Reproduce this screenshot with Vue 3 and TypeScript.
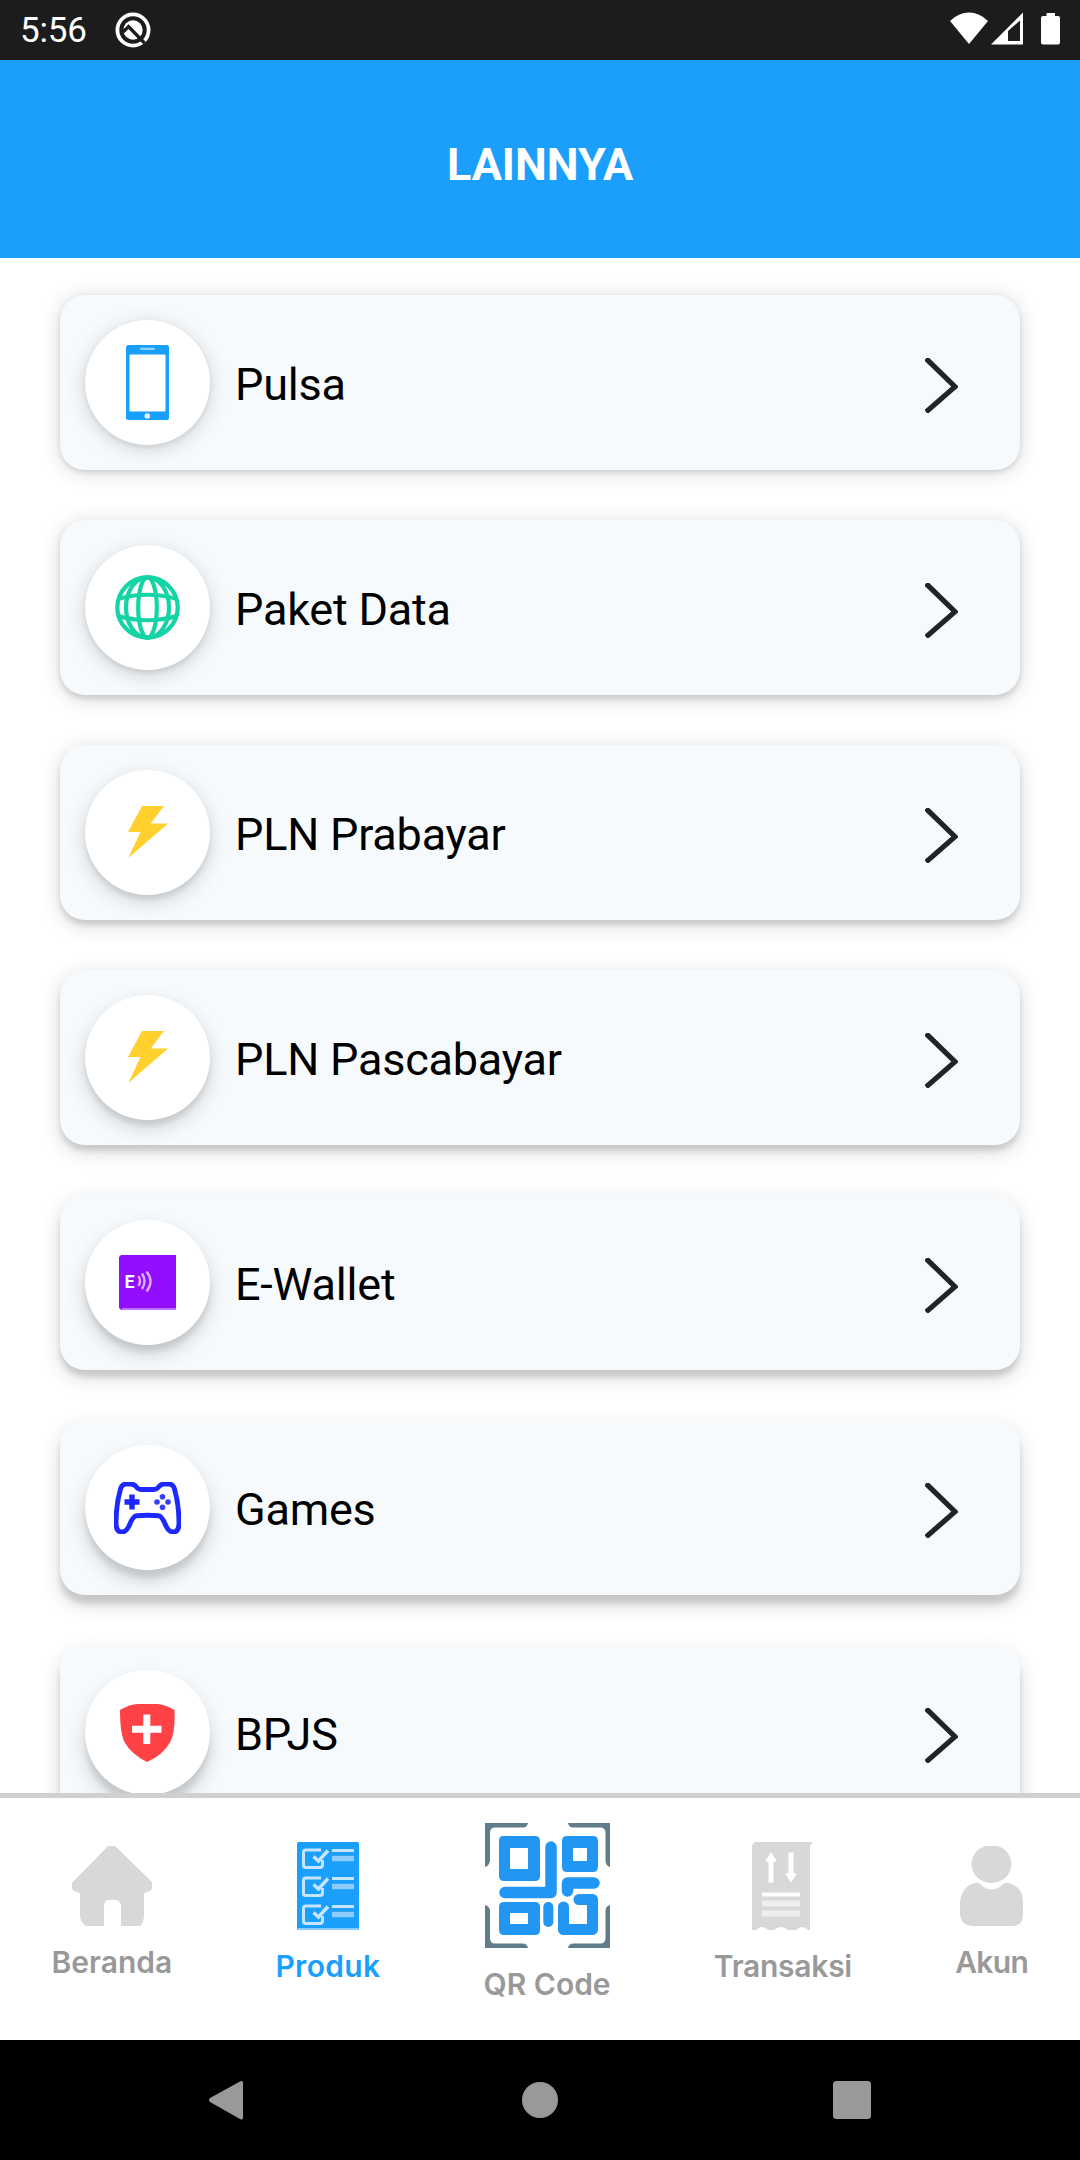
<script setup lang="ts">
interface Product {
  icon: 'phone' | 'globe' | 'bolt' | 'wallet' | 'gamepad' | 'shield'
  label: string
}

interface Tab {
  icon: 'home' | 'checklist' | 'qr' | 'receipt' | 'user'
  label: string
}

const products: Product[] = [
  { icon: 'phone', label: 'Pulsa' },
  { icon: 'globe', label: 'Paket Data' },
  { icon: 'bolt', label: 'PLN Prabayar' },
  { icon: 'bolt', label: 'PLN Pascabayar' },
  { icon: 'wallet', label: 'E-Wallet' },
  { icon: 'gamepad', label: 'Games' },
  { icon: 'shield', label: 'BPJS' },
]

const tabs: Tab[] = [
  { icon: 'home', label: 'Beranda' },
  { icon: 'checklist', label: 'Produk' },
  { icon: 'qr', label: 'QR Code' },
  { icon: 'receipt', label: 'Transaksi' },
  { icon: 'user', label: 'Akun' },
]

const activeTab: Tab['icon'] = 'checklist'

// Elevation shadows fall further the lower the card sits on the screen.
const shadowOffset = (index: number): string => `${(2 + index * 1.25).toFixed(2)}px`
</script>

<template>
  <div class="screen">
    <div class="status">
      <span class="clock">5:56</span>
      <svg class="app-mark" width="36" height="36" viewBox="0 0 36 36">
        <circle cx="18" cy="18" r="15.6" fill="none" stroke="#fff" stroke-width="3.8" />
        <circle cx="18" cy="18" r="9.7" fill="#fff" />
        <path d="M8 20 L13.5 14.6 L29.5 31" fill="none" stroke="#1c1c1c" stroke-width="3.4" />
      </svg>
      <svg class="signals" width="112" height="34" viewBox="0 0 112 34">
        <path d="M0 9 Q8.5 0.5 19 0.5 T38 9 L19 32 Z" fill="#fff" />
        <path d="M41 32.5 L73 0.5 V32.5 Z M58 19 V29 H70 V8.5 Z" fill="#fff" fill-rule="evenodd" />
        <path d="M96.5 1 H105 V4 H108 Q110 4 110 6 V30.5 Q110 32.5 108 32.5 H93 Q91 32.5 91 30.5 V6 Q91 4 93 4 H96.5 Z" fill="#fff" />
      </svg>
    </div>

    <header class="header"><h1>LAINNYA</h1></header>

    <main class="products">
      <div
        v-for="(item, i) in products"
        :key="item.label"
        class="card"
        :style="{ '--drop': shadowOffset(i) }"
      >
        <div class="badge">
          <svg v-if="item.icon === 'phone'" width="43" height="75" viewBox="0 0 43 75">
            <rect width="43" height="75" rx="2.5" fill="#179ffb" />
            <rect x="3.5" y="9.5" width="36" height="57" rx="1" fill="#fff" />
            <path d="M15 3.8 H28" stroke="#8fd0fd" stroke-width="2.2" stroke-linecap="round" />
            <circle cx="21.3" cy="71" r="2.8" fill="#e2f3ff" />
          </svg>
          <svg v-else-if="item.icon === 'globe'" width="65" height="65" viewBox="0 0 65 65" fill="none" stroke="#14d3a4" stroke-width="4.2">
            <circle cx="32.5" cy="32.5" r="30.2" />
            <ellipse cx="32.5" cy="32.5" rx="9.3" ry="30.2" />
            <ellipse cx="32.5" cy="32.5" rx="21.5" ry="30.2" />
            <path d="M3 24 Q32.5 15.5 62 24 M3 41 Q32.5 49.5 62 41" />
          </svg>
          <svg v-else-if="item.icon === 'bolt'" class="bolt" width="40" height="52" viewBox="0 0 40 52">
            <path d="M14 0 H36 L22.7 17.4 H40 L0.3 52 L12.5 26 H0 Z" fill="#ffd02e" />
          </svg>
          <svg v-else-if="item.icon === 'wallet'" width="57" height="55" viewBox="0 0 57 55">
            <path d="M2 0 H57 V55 H2.5 L0 53 V2 Z" fill="#930dff" />
            <path d="M3 54 H57" stroke="#be70ff" stroke-width="2" />
            <text x="5.6" y="32.6" class="wallet-letter">E</text>
            <g fill="none" stroke="#d9aeff" stroke-width="2.4">
              <path d="M19.5 21 Q22.5 26 19.5 31" />
              <path d="M23 18.5 Q28 26 23 34" />
              <path d="M27.5 16.5 Q35.5 26.5 27.5 36.5" />
            </g>
          </svg>
          <svg v-else-if="item.icon === 'gamepad'" width="67" height="52" viewBox="0 0 67 52">
            <path
              d="M12 2 H17 Q20 2 22 4.5 Q24 7.5 27 7.5 H40 Q43 7.5 45 4.5 Q47 2 50 2 H55 Q59 2 60.5 7 Q65 23 65 41 Q65 50 59 50 Q55 50 52 44 Q48 34 44.5 33.8 Q33.5 32.7 22.5 33.8 Q19 34 15 44 Q12 50 8 50 Q2 50 2 41 Q2 23 6.5 7 Q8 2 12 2 Z"
              fill="none" stroke="#1d27ff" stroke-width="4.9" stroke-linejoin="round"
            />
            <path d="M18 12.5 V27.5 M10.5 20 H25.5" stroke="#1d27ff" stroke-width="5.4" />
            <g fill="#3440ff">
              <circle cx="48.5" cy="14.8" r="2.8" />
              <circle cx="48.5" cy="25.2" r="2.8" />
              <circle cx="43" cy="20" r="2.8" />
              <circle cx="54" cy="20" r="2.8" />
            </g>
          </svg>
          <svg v-else width="55" height="58" viewBox="0 0 55 58">
            <path d="M0 6 Q10 0 18 0 H38 Q46 1 54.5 6 Q55.5 28 50 38.500 Q43 51 27 58 Q11 50 4.5 38 Q0 29 0 6 Z" fill="#ff4245" />
            <path d="M26.8 10.5 V40 M12 25.2 H41.5" stroke="#fff" stroke-width="7" />
          </svg>
        </div>
        <span class="name">{{ item.label }}</span>
        <svg class="chevron" width="33" height="55" viewBox="0 0 33 55">
          <path d="M1 0.5 L30 28.7 L1 54" fill="none" stroke="#202426" stroke-width="5.2" />
        </svg>
      </div>
    </main>

    <nav class="tabs">
      <div
        v-for="tab in tabs"
        :key="tab.label"
        class="tab"
        :class="[`tab-${tab.icon}`, { active: tab.icon === activeTab }]"
      >
        <svg v-if="tab.icon === 'home'" width="80" height="80" viewBox="0 0 80 80">
          <path d="M36 0 H43 L80 36 V42 Q79 46 72 47 V69 Q72 76 68 80 H49 V60 Q48 54 44 54 H37 Q32 54 32 60 V80 H14 Q8 76 8 69 V47 Q1 46 0 42 V37 Z" fill="#d8d8d8" />
        </svg>
        <svg v-else-if="tab.icon === 'checklist'" width="62" height="88" viewBox="0 0 62 88">
          <rect width="62" height="88" rx="1.5" fill="#1b9ffc" />
          <path d="M1 87 H61" stroke="#8acdfd" stroke-width="2" />
          <g v-for="y in [0, 28, 56]" :key="y" :transform="`translate(0 ${y})`" fill="none" stroke="#c5e5fe">
            <path d="M24 8 H9 Q6.5 8 6.5 10 V23.5 Q6.5 25.5 9 25.5 H23 Q25.5 25.5 25.5 23 V18" stroke-width="3" />
            <path d="M16.5 14.5 L21.5 19 L31 8.5" stroke-width="3.4" />
            <path d="M35 8.5 H57" stroke-width="3" />
            <path d="M35 16.5 H57" stroke-width="5.4" stroke="#8dcdfd" />
          </g>
        </svg>
        <svg v-else-if="tab.icon === 'qr'" width="125" height="125" viewBox="0 0 125 125">
          <path
            d="M0 0 H43 Q42 4.5 38 4.5 H10 Q5 4.5 5 10 V38 Q4 43 0 44 Z M125 0 H83 Q84 4.5 88 4.5 H115 Q120.5 4.5 120.5 10 V38 Q121 43 125 44 Z M0 125 H43 Q42 120.5 38 120.5 H10 Q5 120.5 5 115 V87 Q4 83 0 82 Z M125 125 H83 Q84 120.5 88 120.5 H115 Q120.5 120.5 120.5 115 V87 Q121 83 125 82 Z"
            fill="#607d8b"
          />
          <g fill="#2196f3" fill-rule="evenodd">
            <path d="M18 13 H50 Q55 13 55 18 V53 Q55 58 50 58 H19 Q14 58 14 53 V18 Q14 13 18 13 Z M25 25 V46 H43 V25 Z" />
            <path d="M82 13 H108 Q113 13 113 18 V43 Q113 49 108 49 H82 Q77 49 77 44 V18 Q77 13 82 13 Z M88 25 V38 H102 V25 Z" />
            <path d="M19 79 H50 Q55 79 55 84 V107 Q55 112 50 112 H19 Q14 112 14 107 V84 Q14 79 19 79 Z M25 90 V101 H43 V90 Z" />
          </g>
          <g fill="none" stroke="#2196f3" stroke-linecap="round" stroke-linejoin="round">
            <path d="M66 24 V69.5 H20" stroke-width="11.5" />
            <path d="M63.3 84 V99" stroke-width="10" />
            <path d="M109 60 H82.5 V68" stroke-width="11.5" />
            <path d="M78.5 84 V106.500 H107.5 V76.5 H94" stroke-width="11" />
          </g>
        </svg>
        <svg v-else-if="tab.icon === 'receipt'" width="62" height="88" viewBox="0 0 62 88">
          <path d="M3 0 H62 Q58 1 58 7 V88 H56 Q50 82 44 88 H36 Q29 82 22 88 H16 Q10 82 4 88 H0 V3 Z" fill="#d8d8d8" />
          <g fill="none" stroke="#fff">
            <path d="M19 40.5 V17 M39 10.5 V34" stroke-width="5" />
            <path d="M19 10 L25 19.5 H13 Z M39 40.5 L45 31.5 H33 Z" fill="#fff" stroke="none" />
            <path d="M10 52.5 H48" stroke-width="4" />
            <path d="M10 61.5 H48 M10 71.5 H48" stroke-width="6" stroke="#eee" />
          </g>
        </svg>
        <svg v-else width="63" height="80" viewBox="0 0 63 80">
          <ellipse cx="31.5" cy="18" rx="20" ry="19" fill="#d8d8d8" />
          <path d="M15 37 Q19 36 21 39 Q32 48 42 39 Q45 36 49 37 Q63 41 63 56 V70 Q62 80 53 80 H12 Q2 80 0 69 V56 Q2 40 15 37 Z" fill="#d8d8d8" />
        </svg>
        <span class="tab-label">{{ tab.label }}</span>
      </div>
    </nav>

    <div class="system">
      <svg width="39" height="40" viewBox="0 0 39 40"><path d="M32 1.5 L2 18 Q0 20 2 22 L32 39 Q35 40.5 35 37.5 V2.5 Q35 0 32 1.5 Z" fill="#999" /></svg>
      <svg width="36" height="36" viewBox="0 0 36 36"><circle cx="18" cy="18" r="18" fill="#999" /></svg>
      <svg width="38" height="38" viewBox="0 0 38 38"><rect width="38" height="38" rx="3.5" fill="#999" /></svg>
    </div>
  </div>
</template>

<style>
body {
  margin: 0;
  background: #fff;
}
</style>

<style scoped>
.screen {
  width: 1080px;
  height: 2160px;
  display: flex;
  flex-direction: column;
  overflow: hidden;
  background: #fff;
  font-family: Roboto, sans-serif;
}
svg {
  display: block;
  flex: none;
}
.status {
  box-sizing: border-box;
  height: 60px;
  flex: none;
  display: flex;
  align-items: center;
  padding: 0 18px 0 20px;
  background: #1c1c1c;
}
.clock {
  width: 95px;
  color: #fff;
  font-size: 35px;
  line-height: 58px;
  padding-top: 2px;
  letter-spacing: -0.2px;
}
.signals {
  margin: 0 0 2px auto;
}
.header {
  height: 198px;
  flex: none;
  display: flex;
  align-items: center;
  justify-content: center;
  background: #1b9ffc;
}
h1 {
  margin: 0;
  padding-top: 12px;
  color: #fff;
  font-size: 45px;
  font-weight: 700;
  line-height: 60px;
}
.products {
  box-sizing: border-box;
  height: 1535px;
  flex: none;
  display: flex;
  flex-direction: column;
  gap: 50px;
  padding: 37px 60px 0;
  overflow: hidden;
}
.card {
  box-sizing: border-box;
  height: 175px;
  flex: none;
  display: flex;
  align-items: center;
  padding: 0 62px 0 25px;
  border-radius: 25px;
  background: #f6fafd;
  box-shadow: 0 var(--drop) 5px rgba(0, 0, 0, 0.11), 0 var(--drop) 20px rgba(0, 0, 0, 0.16);
}
.badge {
  width: 125px;
  height: 125px;
  flex: none;
  display: flex;
  align-items: center;
  justify-content: center;
  border-radius: 50%;
  background: #fff;
  box-shadow: 0 var(--drop) 5px rgba(0, 0, 0, 0.08), 0 calc(var(--drop) + 2px) 20px rgba(0, 0, 0, 0.16);
}
.bolt {
  margin-bottom: 1px;
}
.wallet-letter {
  font: 700 18px Roboto, sans-serif;
  fill: #fff;
}
.name {
  flex: 1;
  margin-left: 25px;
  padding-top: 4px;
  color: #000;
  font-size: 45px;
  line-height: 60px;
  letter-spacing: -0.22px;
}
.chevron {
  margin-top: 6px;
}
.tabs {
  box-sizing: border-box;
  height: 247px;
  flex: none;
  display: flex;
  align-items: center;
  justify-content: space-around;
  border-top: 5px solid #d0d0d0;
  background: #fff;
}
.tab {
  display: flex;
  flex-direction: column;
  align-items: center;
  gap: 16px;
  padding-bottom: 9px;
}
.tab-label {
  color: #999;
  font-family: Inter, sans-serif;
  font-size: 30px;
  font-weight: 600;
  line-height: 41px;
  white-space: nowrap;
}
.tab-checklist .tab-label {
  letter-spacing: 0.3px;
}
.tab-qr {
  padding-bottom: 10px;
}
.tab-receipt .tab-label {
  letter-spacing: -0.25px;
}
.tab-user .tab-label {
  letter-spacing: -0.6px;
}
.tab.active .tab-label {
  color: #1b9ffc;
}
.system {
  box-sizing: border-box;
  height: 120px;
  flex: none;
  display: flex;
  align-items: center;
  justify-content: space-between;
  padding: 0 209px 0 208px;
  background: #000;
}
</style>
